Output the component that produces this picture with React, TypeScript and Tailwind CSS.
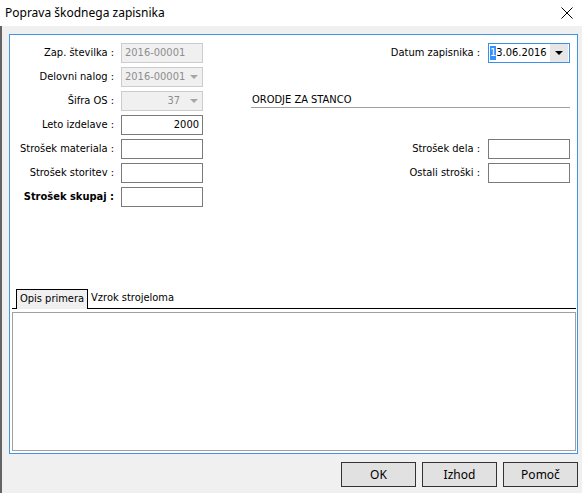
import React from 'react';

const font = { fontFamily: '"DejaVu Sans Condensed", "Liberation Sans", Arial, sans-serif' };

const Label = ({ children, bold }: { children: React.ReactNode; bold?: boolean }) => (
  <div className={`w-[104px] text-right whitespace-nowrap ${bold ? 'font-bold' : ''}`}>{children}</div>
);

const Caret = ({ color }: { color: string }) => (
  <svg width="8" height="4" viewBox="0 0 8 4">
    <path d="M0 0 H8 L4 4 Z" fill={color} />
  </svg>
);

const Field = ({ value, disabled, right }: { value?: string; disabled?: boolean; right?: boolean }) => (
  <div
    className={`ml-[7px] w-[82px] h-[20px] border flex items-center px-[3px] ${
      disabled ? 'bg-[#f0f0f0] border-[#cccccc] text-[#8d8d8d]' : 'bg-white border-[#7a7a7a] text-black'
    } ${right ? 'justify-end' : ''}`}
  >
    {value}
  </div>
);

const Combo = ({ value, right }: { value: string; right?: boolean }) => (
  <div className="ml-[7px] w-[82px] h-[20px] border border-[#cccccc] bg-[#f0f0f0] text-[#8d8d8d] flex items-center pl-[3px]">
    <span className={`flex-1 ${right ? 'text-right pr-[6px]' : ''}`}>{value}</span>
    <span className="w-[16px] flex items-center justify-center">
      <Caret color="#a6a6a6" />
    </span>
  </div>
);

const Row = ({ children }: { children: React.ReactNode }) => (
  <div className="h-[20px] flex items-center justify-between">{children}</div>
);

export default function App() {
  return (
    <div className="w-[582px] h-[493px] bg-[#f0f0f0] flex flex-col text-[11px] text-black overflow-hidden" style={font}>
      {/* title bar */}
      <div className="h-[26px] bg-white flex items-center justify-between pl-[5px] pr-[9px] shrink-0">
        <span className="text-[12px]" style={{ fontFamily: '"Noto Sans", "Liberation Sans", sans-serif' }}>
          Poprava škodnega zapisnika
        </span>
        <svg width="12" height="12" viewBox="0 0 12 12">
          <path d="M0.5 0.5 L11.5 11.5 M11.5 0.5 L0.5 11.5" stroke="#000" strokeWidth="1" />
        </svg>
      </div>

      <div className="flex-1 border-l-2 border-[#646464] pl-[7px] pr-[4px] pt-[8px] flex flex-col">
        {/* main panel */}
        <div className="w-[569px] h-[420px] border border-[#4096e6] bg-white flex flex-col">
          <div className="pt-[8px] pr-[7px] flex flex-col gap-[4px]">
            <Row>
              <div className="flex items-center">
                <Label>Zap. številka :</Label>
                <Field value="2016-00001" disabled />
              </div>
              <div className="flex items-center">
                <span className="whitespace-nowrap">Datum zapisnika :</span>
                <div className="ml-[8px] w-[82px] h-[20px] border border-[#3d8ee6] bg-white flex items-center pl-[1px]">
                  <span className="flex-1 flex items-center">
                    <span className="bg-[#3390ff] text-white leading-[14px]">1</span>
                    <span>3.06.2016</span>
                  </span>
                  <span className="w-[18px] h-[18px] bg-[#e6e6e6] flex items-center justify-center mr-[1px]">
                    <Caret color="#000" />
                  </span>
                </div>
              </div>
            </Row>
            <Row>
              <div className="flex items-center">
                <Label>Delovni nalog :</Label>
                <Combo value="2016-00001" />
              </div>
            </Row>
            <Row>
              <div className="flex items-center">
                <Label>Šifra OS :</Label>
                <Combo value="37" right />
              </div>
              <div className="self-start w-[319px] h-[17px] border-b border-[#a0a0a0] leading-[18px] pl-[1px]">
                ORODJE ZA STANCO
              </div>
            </Row>
            <Row>
              <div className="flex items-center">
                <Label>Leto izdelave :</Label>
                <Field value="2000" right />
              </div>
            </Row>
            <Row>
              <div className="flex items-center">
                <Label>Strošek materiala :</Label>
                <Field />
              </div>
              <div className="flex items-center">
                <span className="whitespace-nowrap">Strošek dela :</span>
                <div className="ml-[8px] w-[82px] h-[20px] border border-[#7a7a7a] bg-white" />
              </div>
            </Row>
            <Row>
              <div className="flex items-center">
                <Label>Strošek storitev :</Label>
                <Field />
              </div>
              <div className="flex items-center">
                <span className="whitespace-nowrap">Ostali stroški :</span>
                <div className="ml-[8px] w-[82px] h-[20px] border border-[#7a7a7a] bg-white" />
              </div>
            </Row>
            <Row>
              <div className="flex items-center">
                <Label bold>Strošek skupaj :</Label>
                <Field />
              </div>
            </Row>
          </div>

          {/* page control */}
          <div className="mt-auto ml-[2px] mr-[1px] mb-[2px] flex flex-col">
            <div className="h-[20px] flex items-end border-b border-black">
              <div className="ml-[4px] h-[20px] px-[3px] bg-[#f0f0f0] border border-b-0 border-black flex items-center -mb-px pb-px">
                Opis primera
              </div>
              <div className="h-[19px] px-[3px] flex items-center">Vzrok strojeloma</div>
            </div>
            <div className="mt-[3px] h-[139px] border border-[#a0a0a0] bg-white" />
          </div>
        </div>

        {/* buttons */}
        <div className="mt-[8px] flex justify-end gap-[6px]">
          {['OK', 'Izhod', 'Pomoč'].map((b) => (
            <button
              key={b}
              className="w-[75px] h-[25px] border border-[#333333] bg-[#e1e1e1] flex items-center justify-center text-[12px]"
              style={{ fontFamily: '"Noto Sans", "Liberation Sans", sans-serif' }}
            >
              {b}
            </button>
          ))}
        </div>
      </div>
    </div>
  );
}
